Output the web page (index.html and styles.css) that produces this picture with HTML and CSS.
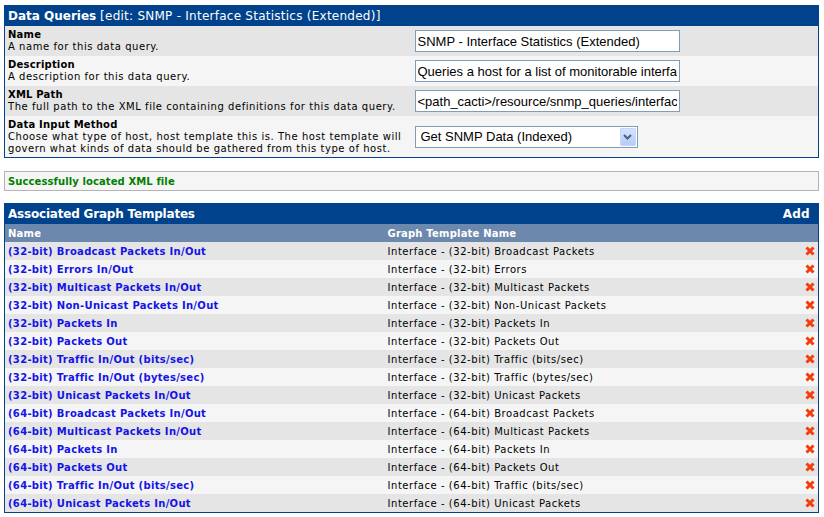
FILE: index.html
```html
<!DOCTYPE html>
<html>
<head>
<meta charset="utf-8">
<title>Data Queries</title>
<link rel="stylesheet" href="styles.css">
</head>
<body>
<div class="page">
  <table class="box form">
    <colgroup><col class="fc1"><col></colgroup>
    <tr class="hdr"><td colspan="2"><b>Data Queries</b> <span class="sub">[edit: SNMP - Interface Statistics (Extended)]</span></td></tr>
    <tr class="r1">
      <td class="lbl"><b>Name</b><br>A name for this data query.</td>
      <td class="fld"><input class="txt" type="text" value="SNMP - Interface Statistics (Extended)"></td>
    </tr>
    <tr class="r2">
      <td class="lbl"><b>Description</b><br>A description for this data query.</td>
      <td class="fld"><input class="txt" type="text" value="Queries a host for a list of monitorable interfaces"></td>
    </tr>
    <tr class="r1">
      <td class="lbl"><b>XML Path</b><br>The full path to the XML file containing definitions for this data query.</td>
      <td class="fld"><input class="txt" type="text" value="&lt;path_cacti&gt;/resource/snmp_queries/interface.xml"></td>
    </tr>
    <tr class="r2 tall">
      <td class="lbl"><b>Data Input Method</b><br>Choose what type of host, host template this is. The host template will govern what kinds of data should be gathered from this type of host.</td>
      <td class="fld">
        <span class="selwrap">
          <select class="sel"><option>Get SNMP Data (Indexed)</option></select>
          <span class="selbtn"><svg width="9" height="6" viewBox="0 0 9 6"><path d="M1 1 L4.5 4.5 L8 1" fill="none" stroke="#4d6185" stroke-width="2"/></svg></span>
        </span>
      </td>
    </tr>
  </table>

  <div class="msg">Successfully located XML file</div>

  <table class="box list">
    <colgroup><col class="lc1"><col><col class="lc3"></colgroup>
    <tr class="hdr"><td colspan="3"><div class="hdrbar"><span>Associated Graph Templates</span><span class="add">Add</span></div></td></tr>
    <tr class="colhdr"><td>Name</td><td>Graph Template Name</td><td></td></tr>
    <tr class="r1"><td><a href="#">(32-bit) Broadcast Packets In/Out</a></td><td>Interface - (32-bit) Broadcast Packets</td><td class="del"><svg class="x" viewBox="0 0 10 10"><path d="M1.5 1.5 L8.5 8.5 M8.5 1.5 L1.5 8.5"/></svg></td></tr>
    <tr class="r2"><td><a href="#">(32-bit) Errors In/Out</a></td><td>Interface - (32-bit) Errors</td><td class="del"><svg class="x" viewBox="0 0 10 10"><path d="M1.5 1.5 L8.5 8.5 M8.5 1.5 L1.5 8.5"/></svg></td></tr>
    <tr class="r1"><td><a href="#">(32-bit) Multicast Packets In/Out</a></td><td>Interface - (32-bit) Multicast Packets</td><td class="del"><svg class="x" viewBox="0 0 10 10"><path d="M1.5 1.5 L8.5 8.5 M8.5 1.5 L1.5 8.5"/></svg></td></tr>
    <tr class="r2"><td><a href="#">(32-bit) Non-Unicast Packets In/Out</a></td><td>Interface - (32-bit) Non-Unicast Packets</td><td class="del"><svg class="x" viewBox="0 0 10 10"><path d="M1.5 1.5 L8.5 8.5 M8.5 1.5 L1.5 8.5"/></svg></td></tr>
    <tr class="r1"><td><a href="#">(32-bit) Packets In</a></td><td>Interface - (32-bit) Packets In</td><td class="del"><svg class="x" viewBox="0 0 10 10"><path d="M1.5 1.5 L8.5 8.5 M8.5 1.5 L1.5 8.5"/></svg></td></tr>
    <tr class="r2"><td><a href="#">(32-bit) Packets Out</a></td><td>Interface - (32-bit) Packets Out</td><td class="del"><svg class="x" viewBox="0 0 10 10"><path d="M1.5 1.5 L8.5 8.5 M8.5 1.5 L1.5 8.5"/></svg></td></tr>
    <tr class="r1"><td><a href="#">(32-bit) Traffic In/Out (bits/sec)</a></td><td>Interface - (32-bit) Traffic (bits/sec)</td><td class="del"><svg class="x" viewBox="0 0 10 10"><path d="M1.5 1.5 L8.5 8.5 M8.5 1.5 L1.5 8.5"/></svg></td></tr>
    <tr class="r2"><td><a href="#">(32-bit) Traffic In/Out (bytes/sec)</a></td><td>Interface - (32-bit) Traffic (bytes/sec)</td><td class="del"><svg class="x" viewBox="0 0 10 10"><path d="M1.5 1.5 L8.5 8.5 M8.5 1.5 L1.5 8.5"/></svg></td></tr>
    <tr class="r1"><td><a href="#">(32-bit) Unicast Packets In/Out</a></td><td>Interface - (32-bit) Unicast Packets</td><td class="del"><svg class="x" viewBox="0 0 10 10"><path d="M1.5 1.5 L8.5 8.5 M8.5 1.5 L1.5 8.5"/></svg></td></tr>
    <tr class="r2"><td><a href="#">(64-bit) Broadcast Packets In/Out</a></td><td>Interface - (64-bit) Broadcast Packets</td><td class="del"><svg class="x" viewBox="0 0 10 10"><path d="M1.5 1.5 L8.5 8.5 M8.5 1.5 L1.5 8.5"/></svg></td></tr>
    <tr class="r1"><td><a href="#">(64-bit) Multicast Packets In/Out</a></td><td>Interface - (64-bit) Multicast Packets</td><td class="del"><svg class="x" viewBox="0 0 10 10"><path d="M1.5 1.5 L8.5 8.5 M8.5 1.5 L1.5 8.5"/></svg></td></tr>
    <tr class="r2"><td><a href="#">(64-bit) Packets In</a></td><td>Interface - (64-bit) Packets In</td><td class="del"><svg class="x" viewBox="0 0 10 10"><path d="M1.5 1.5 L8.5 8.5 M8.5 1.5 L1.5 8.5"/></svg></td></tr>
    <tr class="r1"><td><a href="#">(64-bit) Packets Out</a></td><td>Interface - (64-bit) Packets Out</td><td class="del"><svg class="x" viewBox="0 0 10 10"><path d="M1.5 1.5 L8.5 8.5 M8.5 1.5 L1.5 8.5"/></svg></td></tr>
    <tr class="r2"><td><a href="#">(64-bit) Traffic In/Out (bits/sec)</a></td><td>Interface - (64-bit) Traffic (bits/sec)</td><td class="del"><svg class="x" viewBox="0 0 10 10"><path d="M1.5 1.5 L8.5 8.5 M8.5 1.5 L1.5 8.5"/></svg></td></tr>
    <tr class="r1"><td><a href="#">(64-bit) Unicast Packets In/Out</a></td><td>Interface - (64-bit) Unicast Packets</td><td class="del"><svg class="x" viewBox="0 0 10 10"><path d="M1.5 1.5 L8.5 8.5 M8.5 1.5 L1.5 8.5"/></svg></td></tr>
  </table>
</div>
</body>
</html>
```

FILE: styles.css
```css
html, body {
  margin: 0;
  padding: 0;
  background: #ffffff;
}
body {
  font-family: "DejaVu Sans", Verdana, sans-serif;
  font-size: 10px;
  letter-spacing: 0.55px;
  color: #000000;
}
b { letter-spacing: 0.2px; }
.page {
  padding: 5px 0 0 4px;
  width: 815px;
}
.box {
  width: 815px;
  border-collapse: collapse;
  border: 1px solid #00438c;
  table-layout: fixed;
}
.box td {
  padding: 0 3px;
  vertical-align: middle;
}
.hdr td {
  background: #00438c;
  color: #ffffff;
  font-size: 12px;
  height: 21px;
  padding: 0 3px;
  letter-spacing: 0;
}
.hdr b { letter-spacing: 0; }
.hdr .sub { letter-spacing: 0.25px; }
.form .hdr td {
  height: 20px;
}
.r1 td { background: #e5e5e5; }
.r2 td { background: #f5f5f5; }

.fc1 { width: 410px; }
.form td.lbl {
  height: 30px;
  padding: 0 3px;
  line-height: 12px;
}
.form td.fld {
  padding: 0;
}
.form .tall td { height: 41px; }

.txt {
  box-sizing: border-box;
  width: 265px;
  height: 22px;
  margin: 0;
  padding: 1px 2px;
  border: 1px solid #7f9db9;
  background: #ffffff;
  font-family: "Liberation Sans", Arial, sans-serif;
  font-size: 13px;
  letter-spacing: 0;
  color: #000000;
  display: block;
}
.selwrap {
  position: relative;
  display: block;
  width: 223px;
  height: 22px;
}
.sel {
  box-sizing: border-box;
  -webkit-appearance: none;
  appearance: none;
  width: 223px;
  height: 22px;
  margin: 0;
  padding: 0 5px;
  border: 1px solid #7f9db9;
  border-radius: 0;
  background: #ffffff;
  font-family: "Liberation Sans", Arial, sans-serif;
  font-size: 13px;
  letter-spacing: 0;
  color: #000000;
  display: block;
}
.selbtn {
  position: absolute;
  right: 2px;
  top: 2px;
  width: 16px;
  height: 18px;
  background: linear-gradient(#d4e2fd, #b6cbf8);
  border: 1px solid #c4d6fb;
  box-sizing: border-box;
  border-radius: 1px;
  display: flex;
  align-items: center;
  justify-content: center;
  pointer-events: none;
}

.msg {
  box-sizing: border-box;
  width: 815px;
  height: 20px;
  margin: 13px 0 12px 0;
  border: 1px solid #b4b4b4;
  background: #f5f5f5;
  color: #008000;
  font-weight: bold;
  font-size: 10px;
  letter-spacing: 0.1px;
  line-height: 20px;
  padding: 0 3px;
}

.lc1 { width: 380px; }
.lc3 { width: 24px; }
.list .hdr td {
  height: 20px;
  font-weight: bold;
  letter-spacing: -0.2px;
  padding: 0 8px 0 3px;
}
.hdrbar {
  display: flex;
  justify-content: space-between;
  align-items: center;
}
.hdrbar .add {
  letter-spacing: 0.3px;
}
.colhdr td {
  background: #6d88ad;
  color: #ffffff;
  font-weight: bold;
  letter-spacing: 0.2px;
  height: 18px;
}
.list .r1 td, .list .r2 td {
  height: 18px;
  white-space: nowrap;
  overflow: hidden;
}
.list a {
  color: #1414e6;
  font-weight: bold;
  letter-spacing: 0.3px;
  text-decoration: none;
}
.list td.del {
  text-align: right;
  padding-right: 3px;
  line-height: 0;
}
.x {
  width: 10px;
  height: 10px;
  display: inline-block;
  vertical-align: middle;
}
.x path {
  stroke: #f53d0b;
  stroke-width: 3;
  fill: none;
}
```
